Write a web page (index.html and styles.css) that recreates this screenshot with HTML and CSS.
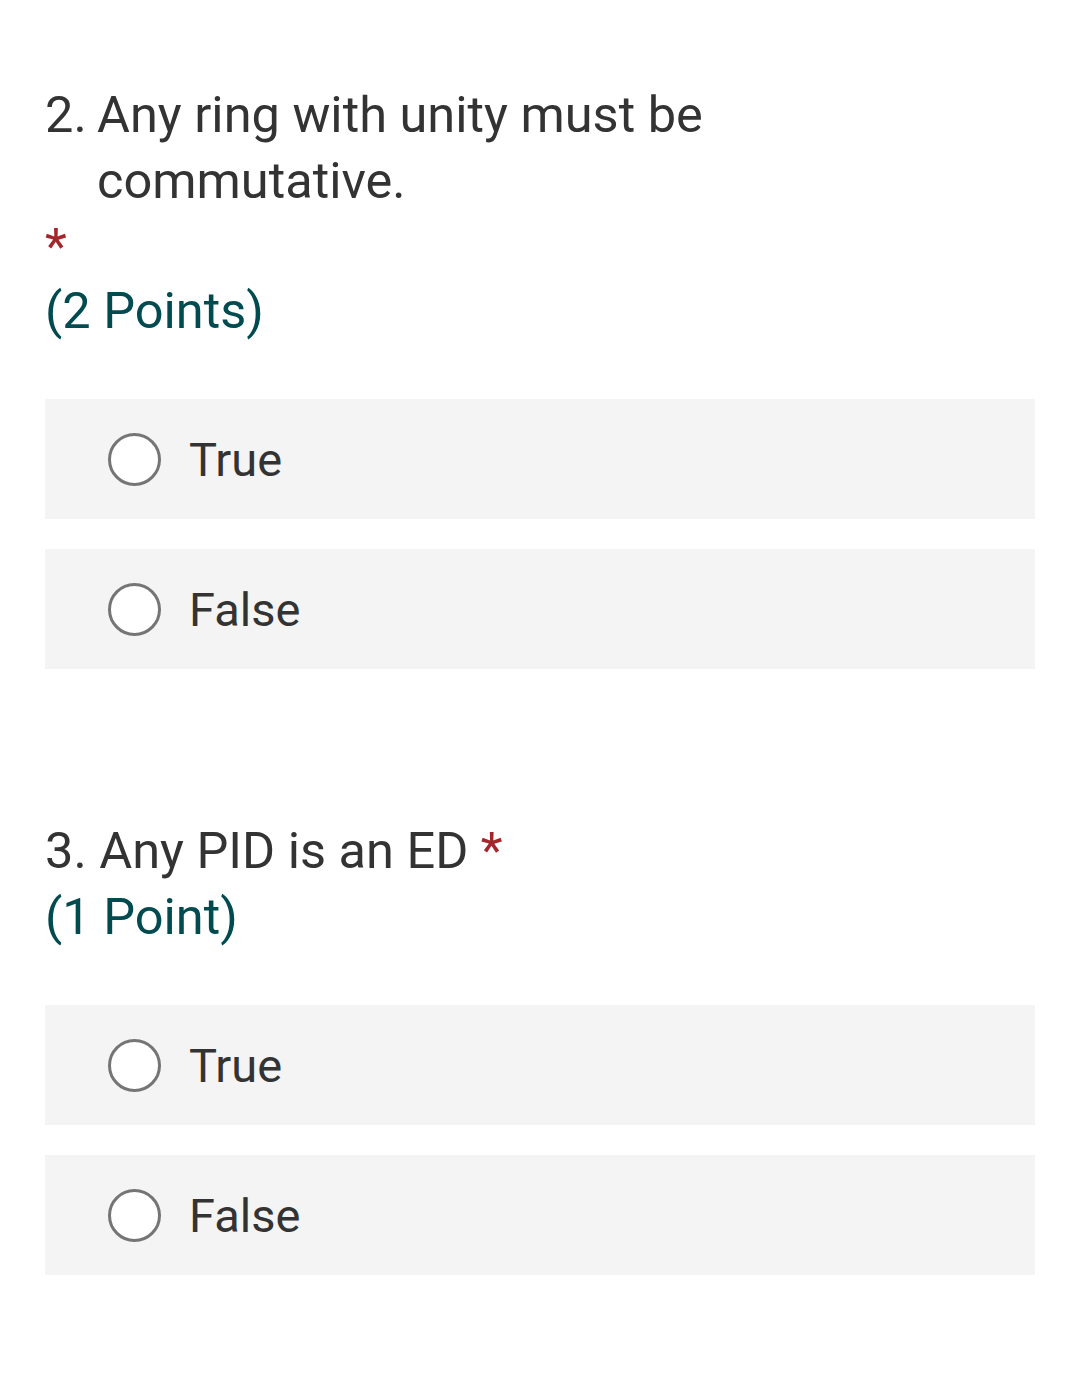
FILE: index.html
```html
<!DOCTYPE html>
<html>
<head>
<meta charset="utf-8">
<link rel="stylesheet" href="styles.css">
</head>
<body>
<div class="page">
  <section class="q q2">
    <div class="title hanging"><span class="num">2.</span><span class="txt">Any ring with unity must be commutative.</span></div>
    <div class="req-line"><span class="req">*</span></div>
    <div class="points">(2 Points)</div>
    <div class="options">
      <label class="opt"><span class="radio"></span><span class="lbl">True</span></label>
      <label class="opt"><span class="radio"></span><span class="lbl">False</span></label>
    </div>
  </section>
  <section class="q q3">
    <div class="title">3. Any PID is an ED <span class="req">*</span></div>
    <div class="points">(1 Point)</div>
    <div class="options">
      <label class="opt"><span class="radio"></span><span class="lbl">True</span></label>
      <label class="opt"><span class="radio"></span><span class="lbl">False</span></label>
    </div>
  </section>
</div>
</body>
</html>
```
FILE: styles.css
```css
html, body { margin: 0; padding: 0; background: #fff; }
body { font-family: Roboto, "Noto Sans", sans-serif; color: #333; }
.page { padding: 82px 45px 0 45px; }
.title { font-size: 50.5px; line-height: 66px; }
.hanging { display: flex; }
.hanging .num { flex: none; width: 52px; }
.hanging .txt { width: 640px; }
.req { color: #a4262c; }
.req-line { font-size: 50.5px; line-height: 66px; height: 64px; }
.points { font-size: 50.5px; line-height: 66px; color: #004b50; }
.options { display: flex; flex-direction: column; gap: 30px; margin-top: 55px; }
.opt { display: flex; align-items: center; height: 120px; background: #f4f4f4; padding-left: 63px; }
.radio { width: 47px; height: 47px; border: 3px solid #757575; border-radius: 50%; background: #fff; flex: none; }
.lbl { font-size: 47px; margin-left: 28px; color: #333; }
.q3 { margin-top: 149px; }
```
